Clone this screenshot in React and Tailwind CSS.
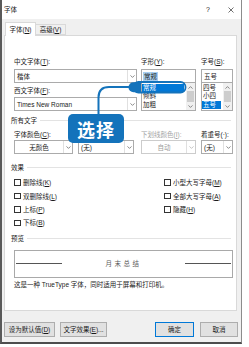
import React from "react";

function Chev({ up = false, color = "#6d6d6d" }) {
  return (
    <svg width="5" height="3" viewBox="0 0 5 3" className="block">
      <polyline
        points={up ? "0.5,2.6 2.5,0.6 4.5,2.6" : "0.5,0.4 2.5,2.4 4.5,0.4"}
        fill="none"
        stroke={color}
        strokeWidth="0.8"
      />
    </svg>
  );
}

function Combo({ className = "", children, textClass = "", disabled = false }) {
  return (
    <div
      className={`h-[14px] border ${
        disabled ? "border-[#cccccc]" : "border-[#ababab]"
      } bg-white flex ${className}`}
    >
      <div className={`flex-1 flex items-center px-[2px] ${textClass}`}>{children}</div>
      <div className="w-[9px] border-l border-[#e0e0e0] flex items-center justify-center">
        <Chev color={disabled ? "#b5b5b5" : "#6d6d6d"} />
      </div>
    </div>
  );
}

function ListBox({ items, sel, className = "" }) {
  return (
    <div className={`h-[28px] border border-t-0 border-[#ababab] bg-white flex ${className}`}>
      <div className="flex-1 flex flex-col pt-[0.5px]">
        {items.map((it, i) => (
          <div
            key={i}
            className={`h-[8.6px] leading-[8.6px] pl-[1px] mr-[2px] ${
              i === sel ? "bg-[#0078d7] text-white" : ""
            }`}
          >
            {it}
          </div>
        ))}
      </div>
      <div className="w-[9px] bg-[#f0f0f0] flex flex-col items-center">
        <div className="h-[8px] flex items-center">
          <Chev up />
        </div>
        <div className="w-[7px] h-[11px] bg-[#cdcdcd]" />
        <div className="flex-1 flex items-center">
          <Chev />
        </div>
      </div>
    </div>
  );
}

function Check({ label }) {
  return (
    <div className="h-[13.4px] flex items-center">
      <div className="w-[6.5px] h-[6.5px] border border-[#333333] bg-white" />
      <span className="ml-[2.5px]">{label}</span>
    </div>
  );
}

function Header({ label, line = true }) {
  return (
    <div className="h-[9px] flex items-center">
      <span>{label}</span>
      {line && <div className="flex-1 ml-[3px] mr-[3px] h-px bg-[#e3e3e3]" />}
    </div>
  );
}

function Btn({ children, className = "" }) {
  return (
    <div
      className={`h-[15px] bg-[#e1e1e1] border flex items-center justify-center ${className}`}
    >
      {children}
    </div>
  );
}

export default function App() {
  return (
    <div className="relative w-[249px] h-[347px] bg-white overflow-hidden font-['Liberation_Sans','Noto_Sans_CJK_SC',sans-serif] text-[6.5px] leading-[9px] text-[#1b1b1b]">
      <div className="w-[242px] h-[344px] border-l-[2px] border-b-[2px] border-r border-l-[#5a5a5a] border-b-[#4d4d4d] border-r-[#8c8c8c] flex flex-col">
        {/* title bar */}
        <div className="h-[19px] bg-white flex items-center pl-[2px] pr-[5px]">
          <span>字体</span>
          <div className="ml-auto w-[10px] flex justify-center text-[7px]">?</div>
          <div className="ml-[13px] w-[10px] flex justify-center">
            <svg width="6" height="6" viewBox="0 0 6 6">
              <path d="M0.5 0.5 L5.5 5.5 M5.5 0.5 L0.5 5.5" stroke="#333" strokeWidth="0.7" />
            </svg>
          </div>
        </div>

        {/* body */}
        <div className="flex-1 bg-[#f0f0f0] flex flex-col pt-[3px]">
          {/* tabs */}
          <div className="flex items-end h-[13px] pl-[3px] relative z-10">
            <div className="h-[14px] -mb-px w-[31px] bg-white border border-b-0 border-[#d9d9d9] flex items-center justify-center">
              字体(<span className="underline">N</span>)
            </div>
            <div className="h-[11px] w-[30px] bg-[#f0f0f0] border border-l-0 border-[#d9d9d9] flex items-center justify-center">
              高级(<span className="underline">V</span>)
            </div>
          </div>

          {/* panel */}
          <div className="ml-[2px] w-[233px] h-[276px] bg-white border border-[#d9d9d9] pl-[6px] pr-[2px] pt-[21px] flex flex-col">
            {/* font section */}
            <div className="flex pl-[3px]">
              <div className="w-[123px] flex flex-col">
                <div className="h-[9px]">中文字体(<span className="underline">T</span>):</div>
                <Combo className="mt-[3px]">楷体</Combo>
                <div className="h-[9px] mt-[3px]">西文字体(<span className="underline">F</span>):</div>
                <Combo className="mt-[2px]">Times New Roman</Combo>
              </div>
              <div className="ml-[4px] w-[55px] flex flex-col">
                <div className="h-[9px]">字形(<span className="underline">Y</span>):</div>
                <div className="mt-[3px] h-[14px] border border-[#ababab] bg-white flex items-center px-[1px]">
                  <span className="bg-[#a8cff0] px-[1px]">常规</span>
                </div>
                <ListBox items={["常规", "倾斜", "加粗"]} sel={0} />
              </div>
              <div className="ml-[5px] w-[32px] flex flex-col">
                <div className="h-[9px]">字号(<span className="underline">S</span>):</div>
                <div className="mt-[3px] h-[14px] border border-[#ababab] bg-white flex items-center px-[2px]">
                  五号
                </div>
                <ListBox items={["四号", "小四", "五号"]} sel={2} />
              </div>
            </div>

            {/* all text */}
            <div className="mt-[5px]">
              <Header label="所有文字" />
            </div>
            <div className="flex pl-[3px] mt-[5px]">
              <div className="w-[59px] flex flex-col">
                <div className="h-[9px]">字体颜色(<span className="underline">C</span>):</div>
                <Combo className="mt-px" textClass="justify-center">无颜色</Combo>
              </div>
              <div className="ml-[5px] w-[56px] flex flex-col">
                <div className="h-[9px]" />
                <Combo className="mt-px">(无)</Combo>
              </div>
              <div className="ml-[7px] w-[55px] flex flex-col">
                <div className="h-[9px] text-[#a3a3a3]">下划线颜色(<span className="underline">I</span>):</div>
                <Combo className="mt-px" textClass="justify-center text-[#9a9a9a]" disabled>
                  自动
                </Combo>
              </div>
              <div className="ml-[5px] w-[32px] flex flex-col">
                <div className="h-[9px]">着重号(·):</div>
                <Combo className="mt-px">(无)</Combo>
              </div>
            </div>

            {/* effects */}
            <div className="mt-[9px]">
              <Header label="效果" />
            </div>
            <div className="flex pl-[3px] mt-[4px]">
              <div className="w-[150px] flex flex-col">
                <Check label={<>删除线(<span className="underline">K</span>)</>} />
                <Check label={<>双删除线(<span className="underline">L</span>)</>} />
                <Check label={<>上标(<span className="underline">P</span>)</>} />
                <Check label={<>下标(<span className="underline">B</span>)</>} />
              </div>
              <div className="flex flex-col">
                <Check label={<>小型大写字母(<span className="underline">M</span>)</>} />
                <Check label={<>全部大写字母(<span className="underline">A</span>)</>} />
                <Check label={<>隐藏(<span className="underline">H</span>)</>} />
              </div>
            </div>

            {/* preview */}
            <div className="mt-[4px]">
              <Header label="预览" />
            </div>
            <div className="ml-[3px] mt-[7px] w-[219px] h-[28px] border border-[#a9a9a9] flex items-center px-px">
              <div className="w-[46px] h-px bg-[#555555]" />
              <div className="flex-1 text-center text-[#5a5a5a] tracking-[2.5px]">月末总结</div>
              <div className="w-[46px] h-px bg-[#555555]" />
            </div>
            <div className="ml-[3px] mt-[2px] h-[9px]">
              这是一种 TrueType 字体，同时适用于屏幕和打印机。
            </div>
          </div>

          {/* footer */}
          <div className="mt-[11px] flex pl-[2px] pr-[3px]">
            <Btn className="w-[51px] border-[#adadad]">
              设为默认值(<span className="underline">D</span>)
            </Btn>
            <Btn className="ml-[5px] w-[47px] border-[#adadad]">
              文字效果(<span className="underline">E</span>)...
            </Btn>
            <Btn className="ml-auto w-[39px] border-[#0078d7]">确定</Btn>
            <Btn className="ml-[6px] w-[38px] border-[#adadad]">取消</Btn>
          </div>
        </div>
      </div>

      {/* callout overlay */}
      <svg
        className="absolute left-0 top-0 pointer-events-none"
        width="249"
        height="347"
        viewBox="0 0 249 347"
      >
        <rect x="133.5" y="82" width="52" height="10.5" rx="5" fill="none" stroke="#1473bb" strokeWidth="1.8" />
        <path d="M133.5 82.2 A5 5 0 0 0 133.5 92.3 L141 92.3 L141 82.2 Z" fill="#1473bb" />
        <path d="M134 87 H109 Q98.5 87 98.5 97.5 V115" fill="none" stroke="#1473bb" strokeWidth="2" />
      </svg>
      <div className="absolute left-[68px] top-[114px] w-[56px] h-[29px] rounded-[5px] bg-[#1473bb] flex items-center justify-center text-white text-[18px] leading-[18px] font-bold font-['Noto_Sans_CJK_SC',sans-serif] tracking-[1px]">
        选择
      </div>
    </div>
  );
}
